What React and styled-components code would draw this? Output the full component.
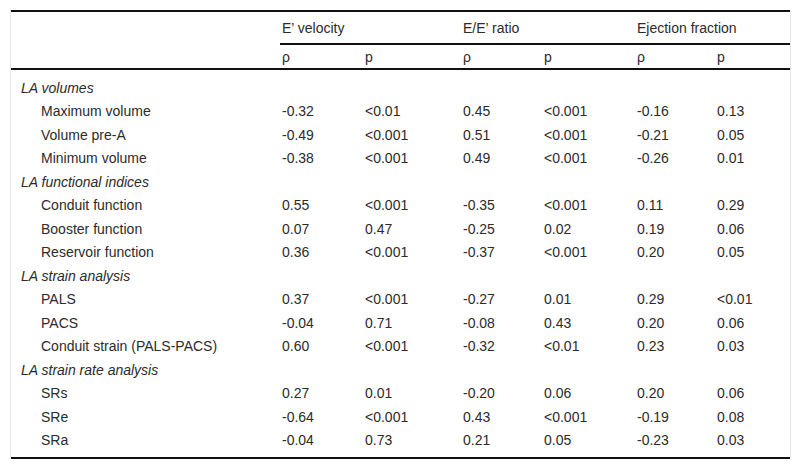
import React from 'react';
import styled, { createGlobalStyle } from 'styled-components';

const GlobalStyle = createGlobalStyle`
  html, body {
    margin: 0;
    padding: 0;
    background: #fff;
  }
  body {
    font-family: "Liberation Sans", Arial, sans-serif;
    font-size: 14px;
    color: #2b2b2b;
  }
`;

const COLS = '269px 83px 98px 81px 93px 80px 75px';

const Frame = styled.div`
  margin: 10px 0 0 10px;
  width: 779px;
  border-left: 1px solid #e6e6e6;
  border-right: 1px solid #e6e6e6;
`;

const Table = styled.div`
  border-top: 2px solid #111;
  border-bottom: 2px solid #111;
`;

const Head = styled.div`
  border-bottom: 2px solid #111;
`;

const GroupRow = styled.div`
  display: grid;
  grid-template-columns: ${COLS};
  height: 31px;
`;

const Group = styled.div`
  grid-column: span 2;
  display: flex;
  align-items: center;
  padding-left: 2px;
  border-bottom: 2px solid #111;
  height: 31px;
`;

const SubRow = styled.div`
  display: grid;
  grid-template-columns: ${COLS};
  height: 23px;
  margin-top: 2px;
`;

const HeadCell = styled.div`
  display: flex;
  align-items: center;
  padding-left: 2px;
`;

const Body = styled.div`
  padding: 6px 0 5px;
`;

const Row = styled.div`
  display: grid;
  grid-template-columns: ${COLS};
  height: 23.5px;
  align-items: center;
`;

const Label = styled.div`
  padding-left: ${(p) => (p.$section ? '10px' : '30px')};
  font-style: ${(p) => (p.$section ? 'italic' : 'normal')};
  grid-column: ${(p) => (p.$section ? '1 / -1' : 'auto')};
  white-space: nowrap;
`;

const Cell = styled.div`
  padding-left: 2px;
  white-space: nowrap;
`;

const sections = [
  {
    title: 'LA volumes',
    rows: [
      ['Maximum volume', '-0.32', '<0.01', '0.45', '<0.001', '-0.16', '0.13'],
      ['Volume pre-A', '-0.49', '<0.001', '0.51', '<0.001', '-0.21', '0.05'],
      ['Minimum volume', '-0.38', '<0.001', '0.49', '<0.001', '-0.26', '0.01'],
    ],
  },
  {
    title: 'LA functional indices',
    rows: [
      ['Conduit function', '0.55', '<0.001', '-0.35', '<0.001', '0.11', '0.29'],
      ['Booster function', '0.07', '0.47', '-0.25', '0.02', '0.19', '0.06'],
      ['Reservoir function', '0.36', '<0.001', '-0.37', '<0.001', '0.20', '0.05'],
    ],
  },
  {
    title: 'LA strain analysis',
    rows: [
      ['PALS', '0.37', '<0.001', '-0.27', '0.01', '0.29', '<0.01'],
      ['PACS', '-0.04', '0.71', '-0.08', '0.43', '0.20', '0.06'],
      ['Conduit strain (PALS-PACS)', '0.60', '<0.001', '-0.32', '<0.01', '0.23', '0.03'],
    ],
  },
  {
    title: 'LA strain rate analysis',
    rows: [
      ['SRs', '0.27', '0.01', '-0.20', '0.06', '0.20', '0.06'],
      ['SRe', '-0.64', '<0.001', '0.43', '<0.001', '-0.19', '0.08'],
      ['SRa', '-0.04', '0.73', '0.21', '0.05', '-0.23', '0.03'],
    ],
  },
];

const groups = ['E\u2019 velocity', 'E/E\u2019 ratio', 'Ejection fraction'];

function App() {
  return (
    <>
      <GlobalStyle />
      <Frame>
        <Table>
          <Head>
            <GroupRow>
              <div />
              {groups.map((g) => (
                <Group key={g}>{g}</Group>
              ))}
            </GroupRow>
            <SubRow>
              <div />
              {groups.map((g) => (
                <React.Fragment key={g}>
                  <HeadCell>ρ</HeadCell>
                  <HeadCell>p</HeadCell>
                </React.Fragment>
              ))}
            </SubRow>
          </Head>
          <Body>
            {sections.map((s) => (
              <React.Fragment key={s.title}>
                <Row>
                  <Label $section>{s.title}</Label>
                </Row>
                {s.rows.map(([name, ...vals]) => (
                  <Row key={name}>
                    <Label>{name}</Label>
                    {vals.map((v, i) => (
                      <Cell key={i}>{v}</Cell>
                    ))}
                  </Row>
                ))}
              </React.Fragment>
            ))}
          </Body>
        </Table>
      </Frame>
    </>
  );
}

export default App;
